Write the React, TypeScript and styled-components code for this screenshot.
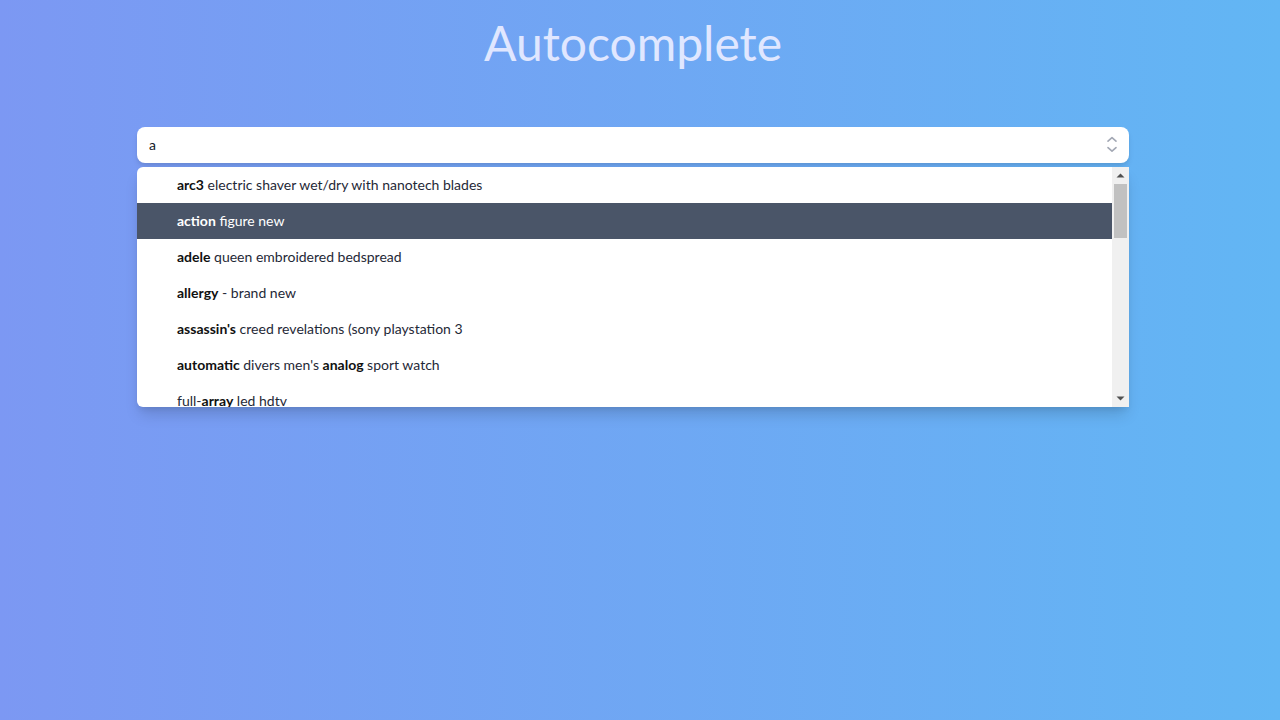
import React from "react";
import styled, { createGlobalStyle } from "styled-components";

const Global = createGlobalStyle`
  html, body { margin: 0; padding: 0; }
  body {
    min-height: 720px;
    font-family: Lato, "Open Sans", sans-serif;
    background: linear-gradient(to right, #7c98f3, #62b6f4);
  }
`;

const Page = styled.div`
  display: flex;
  flex-direction: column;
  align-items: center;
  padding: 15px 14px 0 0;
  min-height: 705px;
`;

const Title = styled.h1`
  margin: 0;
  font-size: 48px;
  line-height: 56px;
  font-weight: 400;
  color: #e0e7ff;
`;

const Box = styled.div`
  width: 992px;
  margin-top: 56px;
`;

const InputWrap = styled.div`
  display: flex;
  align-items: center;
  height: 36px;
  background: #fff;
  border-radius: 8px;
  box-shadow: 0 4px 6px -1px rgba(0,0,0,0.1), 0 2px 4px -1px rgba(0,0,0,0.06);
`;

const Input = styled.input`
  flex: 1;
  border: none;
  outline: none;
  background: transparent;
  padding: 0 12px;
  margin-top: -1px;
  font-family: inherit;
  font-size: 14px;
  color: #111827;
  height: 100%;
`;

const IconBtn = styled.span`
  display: flex;
  align-items: center;
  padding-right: 7px;
`;

const ListFrame = styled.div`
  display: flex;
  margin-top: 4px;
  height: 240px;
  background: #fff;
  border-radius: 6px 0 0 6px;
  overflow: hidden;
  box-shadow: 0 10px 15px -3px rgba(0,0,0,0.15), 0 4px 6px -2px rgba(0,0,0,0.08);
`;

const List = styled.ul`
  flex: 1;
  list-style: none;
  margin: 0;
  padding: 0;
  overflow: hidden;
  font-size: 14px;
`;

const Item = styled.li<{ $active?: boolean }>`
  height: 36px;
  display: flex;
  align-items: center;
  padding-left: 40px;
  padding-bottom: 1px;
  box-sizing: border-box;
  white-space: nowrap;
  color: ${(p) => (p.$active ? "#ffffff" : "#1f2937")};
  background: ${(p) => (p.$active ? "#4a5568" : "transparent")};
  b { font-weight: 700; color: ${(p) => (p.$active ? "#ffffff" : "#111111")}; white-space: pre; }
  span { white-space: pre; }
`;

const ScrollTrack = styled.div`
  width: 17px;
  display: flex;
  flex-direction: column;
  background: #f0f0f0;
`;

const ScrollButton = styled.div`
  height: 17px;
  display: flex;
  align-items: center;
  justify-content: center;
`;

const ThumbArea = styled.div`
  flex: 1;
  padding: 0 2px;
`;

const Thumb = styled.div`
  height: 54px;
  background: #c1c1c1;
`;

const items: string[] = [
  "**arc3** electric shaver wet/dry with nanotech blades",
  "**action** figure new",
  "**adele** queen embroidered bedspread",
  "**allergy** - brand new",
  "**assassin's** creed revelations (sony playstation 3",
  "**automatic** divers men's **analog** sport watch",
  "full-**array** led hdtv",
  "**apple** ipad mini 16gb wifi",
  "**audio** technica headphones",
];

function render(s: string) {
  const parts = s.split("**");
  return parts.map((p, i) => (i % 2 === 1 ? <b key={i}>{p}</b> : <span key={i}>{p}</span>));
}

export default function App() {
  return (
    <>
      <Global />
      <Page>
        <Title>Autocomplete</Title>
        <Box>
          <InputWrap>
            <Input defaultValue="a" />
            <IconBtn>
              <svg width="20" height="20" viewBox="0 0 20 20" fill="none" stroke="#a3a8b4" strokeWidth="1.6" strokeLinecap="round" strokeLinejoin="round">
                <path d="M6 6.2l4-3.6 4 3.6M6 12.6l4 3.6 4-3.6" />
              </svg>
            </IconBtn>
          </InputWrap>
          <ListFrame>
            <List>
              {items.map((s, i) => (
                <Item key={i} $active={i === 1}>{render(s)}</Item>
              ))}
            </List>
            <ScrollTrack>
              <ScrollButton>
                <svg width="9" height="5" viewBox="0 0 9 5"><path d="M0.5 4.5 L4.5 0.5 L8.5 4.5 Z" fill="#505050" /></svg>
              </ScrollButton>
              <ThumbArea>
                <Thumb />
              </ThumbArea>
              <ScrollButton>
                <svg width="9" height="5" viewBox="0 0 9 5"><path d="M0.5 0.5 L4.5 4.5 L8.5 0.5 Z" fill="#505050" /></svg>
              </ScrollButton>
            </ScrollTrack>
          </ListFrame>
        </Box>
      </Page>
    </>
  );
}
